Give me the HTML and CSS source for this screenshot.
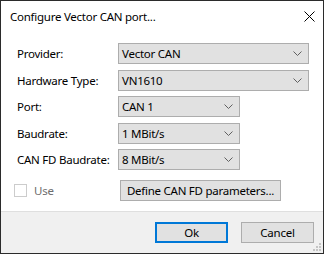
FILE: index.html
```html
<!DOCTYPE html>
<html lang="en">
<head>
  <meta charset="UTF-8">
  <title>Configure Vector CAN port...</title>
  <link rel="stylesheet" href="styles.css">
</head>
<body>

<div class="window">
  <div class="titlebar">
    <span class="title">Configure Vector CAN port...</span>
    <svg class="close" width="11" height="11" viewBox="0 0 11 11">
      <path d="M0.5 0.5 L10.5 10.5 M10.5 0.5 L0.5 10.5" stroke="#000" stroke-width="1"/>
    </svg>
  </div>

  <!-- Port settings -->
  <div class="content">
    <label class="lbl">Provider:</label>
    <div class="combo wide">Vector CAN<svg class="chev" width="9" height="5" viewBox="0 0 9 5"><path d="M0.5 0.5 L4.5 4.5 L8.5 0.5" fill="none" stroke="#606060"/></svg></div>

    <label class="lbl">Hardware Type:</label>
    <div class="combo wide">VN1610<svg class="chev" width="9" height="5" viewBox="0 0 9 5"><path d="M0.5 0.5 L4.5 4.5 L8.5 0.5" fill="none" stroke="#606060"/></svg></div>

    <label class="lbl">Port:</label>
    <div class="combo short">CAN 1<svg class="chev" width="9" height="5" viewBox="0 0 9 5"><path d="M0.5 0.5 L4.5 4.5 L8.5 0.5" fill="none" stroke="#606060"/></svg></div>

    <label class="lbl">Baudrate:</label>
    <div class="combo short">1 MBit/s<svg class="chev" width="9" height="5" viewBox="0 0 9 5"><path d="M0.5 0.5 L4.5 4.5 L8.5 0.5" fill="none" stroke="#606060"/></svg></div>

    <label class="lbl">CAN FD Baudrate:</label>
    <div class="combo short">8 MBit/s<svg class="chev" width="9" height="5" viewBox="0 0 9 5"><path d="M0.5 0.5 L4.5 4.5 L8.5 0.5" fill="none" stroke="#606060"/></svg></div>

    <div class="use"><span class="check"></span><span class="use-text">Use</span></div>
    <div class="btn define">Define CAN FD parameters...</div>
  </div>

  <div class="footer">
    <div class="btn ok">Ok</div>
    <div class="btn">Cancel</div>
    <svg class="grip" width="8" height="8" viewBox="0 0 8 8">
      <rect x="6" y="0" width="2" height="2" fill="#c4c4c4"/>
      <rect x="3" y="3" width="2" height="2" fill="#c4c4c4"/>
      <rect x="6" y="3" width="2" height="2" fill="#c4c4c4"/>
      <rect x="0" y="6" width="2" height="2" fill="#c4c4c4"/>
      <rect x="3" y="6" width="2" height="2" fill="#c4c4c4"/>
      <rect x="6" y="6" width="2" height="2" fill="#c4c4c4"/>
    </svg>
  </div>
</div>

</body>
</html>
```

FILE: styles.css
```css
body {
  margin: 0;
  background-color: #ffffff;
  font-family: "Noto Sans", sans-serif;
  font-size: 11.5px;
  letter-spacing: -0.25px;
  color: #000;
}
.window {
  position: relative;
  width: 324px;
  height: 254px;
  box-sizing: border-box;
  border: 1px solid #2b2b2b;
  display: flex;
  flex-direction: column;
  background-color: #ffffff;
}
.titlebar {
  height: 30px;
  display: flex;
  align-items: center;
  padding: 0 8px 0 9px;
}
.title {
  flex: 1;
}
.content {
  flex: 1;
  display: grid;
  grid-template-columns: 101px auto;
  grid-auto-rows: 21px;
  row-gap: 5.5px;
  align-items: center;
  justify-items: start;
  padding: 12px 0 0 16px;
}
.lbl {
  line-height: 21px;
  white-space: nowrap;
}
.combo {
  box-sizing: border-box;
  height: 21px;
  background-color: #e1e1e1;
  border: 1px solid #adadad;
  display: flex;
  align-items: center;
  justify-content: space-between;
  padding: 0 6px 0 3px;
}
.wide {
  width: 191px;
}
.short {
  width: 122px;
}
.use {
  display: flex;
  align-items: center;
  margin-top: 8px;
  margin-left: -3px;
}
.check {
  width: 11px;
  height: 11px;
  border: 1px solid #cccccc;
  background-color: #fff;
}
.use-text {
  margin-left: 7px;
  color: #6d6d6d;
}
.btn {
  box-sizing: border-box;
  height: 21px;
  background-color: #e1e1e1;
  border: 1px solid #adadad;
  display: flex;
  align-items: center;
  justify-content: center;
  white-space: nowrap;
}
.define {
  width: 161px;
  margin-top: 8px;
  margin-left: 2px;
}
.footer {
  height: 42px;
  border-top: 1px solid #dfdfdf;
  background-color: #f0f0f0;
  display: flex;
  justify-content: flex-end;
  align-items: flex-start;
  gap: 13px;
  padding: 10px 9px 0 0;
  box-sizing: border-box;
}
.footer .btn {
  width: 73px;
  height: 21px;
}
.ok {
  border: 2px solid #0078d7;
}
.grip {
  position: absolute;
  right: 2px;
  bottom: 2px;
}
```
